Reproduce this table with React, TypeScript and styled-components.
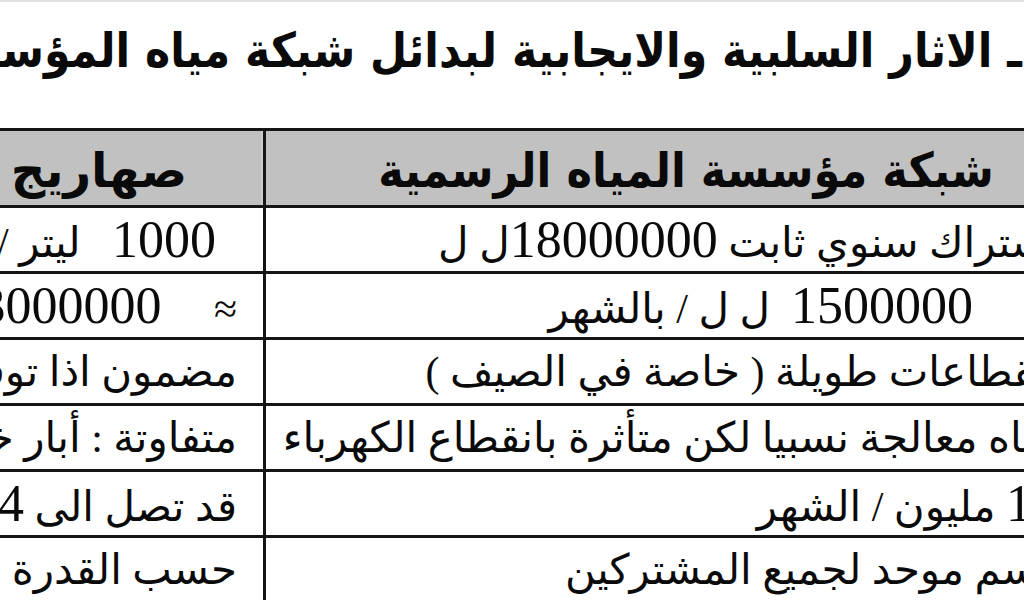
import React from 'react'
import styled, { createGlobalStyle } from 'styled-components'

const GlobalStyle = createGlobalStyle`
  html, body {
    margin: 0;
    padding: 0;
    background: #fff;
  }
`

const Page = styled.div`
  width: 1024px;
  height: 600px;
  overflow: hidden;
  background: #fff;
  border-top: 2px solid #e2e2e2;
  box-sizing: border-box;
`

// the slide is wider than the window, so it is shifted and cut at both sides
const Sheet = styled.div`
  margin-left: -65px;
  width: 1170px;
  direction: rtl;
`

const Title = styled.h1`
  margin: 0;
  height: 126px;
  padding: 13px 83px 0 0;
  box-sizing: border-box;
  font-family: 'DejaVu Sans', 'Liberation Sans', sans-serif;
  font-weight: bold;
  font-size: 48px;
  line-height: 70px;
  white-space: nowrap;
  color: #0a0a0a;
`

const Squeeze = styled.span<{ $x: number }>`
  display: inline-block;
  transform: scaleX(${(p) => p.$x});
  transform-origin: center;
`

const TitleText = styled(Squeeze)`
  transform-origin: right center;
`

const Grid = styled.div`
  border-top: 3px solid #151515;
`

const Row = styled.div<{ $head?: boolean }>`
  display: grid;
  grid-template-columns: 842px 328px;
  height: ${(p) => (p.$head ? 77 : 66)}px;
  border-bottom: 3px solid #151515;
  box-sizing: border-box;
  background: ${(p) => (p.$head ? '#c1c1c1' : '#fff')};
`

const Cell = styled.div<{ $wide?: boolean; $inset?: number }>`
  display: flex;
  align-items: center;
  padding-right: ${(p) => (p.$wide ? 47 : 26) + (p.$inset ?? 0)}px;
  border-left: ${(p) => (p.$wide ? '3px solid #151515' : 'none')};
  overflow: hidden;
  color: #0a0a0a;
  font-family: 'Liberation Serif', 'DejaVu Sans', serif;
  font-size: 42px;
`

// one inline run per cell, so the bidi order and the spaces stay as typed
const CellText = styled.span`
  white-space: pre;
`

const HeadCell = styled.div<{ $wide?: boolean }>`
  display: flex;
  align-items: center;
  justify-content: center;
  padding-top: 4px;
  border-left: ${(p) => (p.$wide ? '3px solid #151515' : 'none')};
  box-shadow: inset -26px 0 0 -24px #cdcdcd;
  white-space: nowrap;
  overflow: hidden;
  color: #0a0a0a;
  font-family: 'DejaVu Sans', 'Liberation Sans', sans-serif;
  font-weight: bold;
  font-size: 48px;
`

const Num = styled.span`
  font-family: 'Liberation Serif', serif;
  font-size: 52px;
`

const withNumbers = (text: string) =>
  text.split(/(\d+)/).map((part, i) => (/^\d+$/.test(part) ? <Num key={i}>{part}</Num> : part))

const rows: { net: string; tank: string; inset?: number }[] = [
  { net: 'اشتراك سنوي ثابت 18000000ل ل', tank: '  1000   ليتر / 25000 ل ل' },
  { net: '1500000  ل ل / بالشهر', tank: '≈     3000000 ل ل', inset: 85 },
  { net: 'انقطاعات طويلة ( خاصة في الصيف )', tank: 'مضمون اذا توفر المال' },
  { net: 'مياه معالجة نسبيا لكن متأثرة بانقطاع الكهرباء', tank: 'متفاوتة : أبار خاصة' },
  { net: '15 مليون / الشهر', tank: 'قد تصل الى 4 مليون' },
  { net: 'رسم موحد لجميع المشتركين', tank: 'حسب القدرة المالية' },
]

const App = () => (
  <Page>
    <GlobalStyle />
    <Sheet>
      <Title>
        <TitleText $x={0.89}>ـ الاثار السلبية والايجابية لبدائل شبكة مياه المؤسسة</TitleText>
      </Title>
      <Grid>
        <Row $head>
          <HeadCell $wide>
            <Squeeze $x={0.9}>شبكة مؤسسة المياه الرسمية</Squeeze>
          </HeadCell>
          <HeadCell>صهاريج</HeadCell>
        </Row>
        {rows.map((r) => (
          <Row key={r.net}>
            <Cell $wide $inset={r.inset}>
              <CellText>{withNumbers(r.net)}</CellText>
            </Cell>
            <Cell>
              <CellText>{withNumbers(r.tank)}</CellText>
            </Cell>
          </Row>
        ))}
      </Grid>
    </Sheet>
  </Page>
)

export default App
